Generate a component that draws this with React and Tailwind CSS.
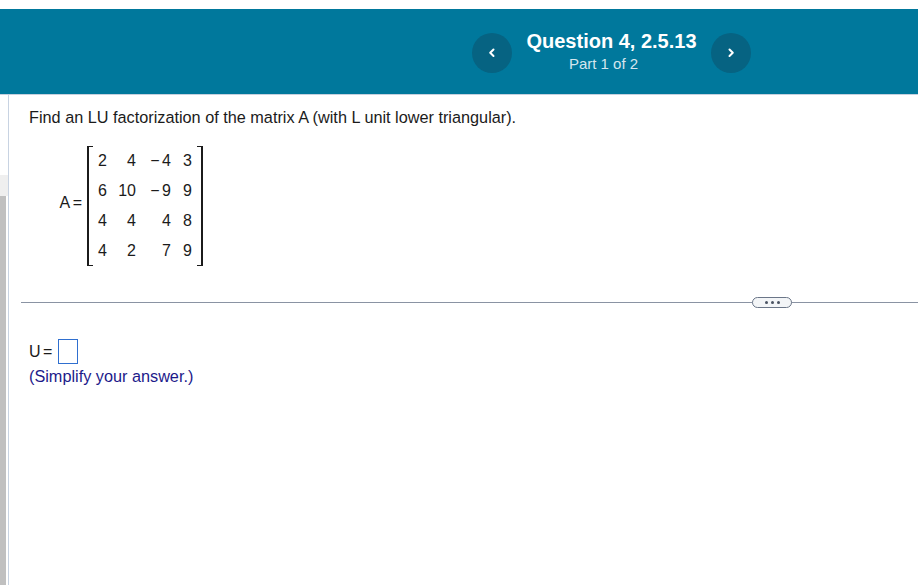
const font = { fontFamily: '"Liberation Sans", Arial, sans-serif' };

const rows = [
  ["2", "4", "\u2212 4", "3"],
  ["6", "10", "\u2212 9", "9"],
  ["4", "4", "4", "8"],
  ["4", "2", "7", "9"],
];

function Nav({ dir }) {
  return (
    <button className="mt-[2px] flex h-10 w-10 items-center justify-center rounded-full bg-[#066382]">
      <svg width="8" height="12" viewBox="0 0 8 12" fill="none" stroke="#ffffff" strokeWidth="2" strokeLinecap="round" strokeLinejoin="round">
        {dir === "left" ? <path d="M5.5 2.5 L2.2 5.8 L5.5 9" /> : <path d="M2.5 2.5 L5.8 5.8 L2.5 9" />}
      </svg>
    </button>
  );
}

export default function App() {
  return (
    <div className="flex h-[585px] w-[918px] flex-col overflow-hidden bg-white pt-[9px]" style={font}>
      <header className="flex h-[86px] shrink-0 items-center border-b border-[#c5d0de] bg-[#00789c] pl-[472px]">
        <Nav dir="left" />
        <div className="mb-[2px] ml-[14px] flex w-[171px] flex-col items-center">
          <div className="text-[20px] leading-[26px] font-bold text-white">Question 4, 2.5.13</div>
          <div className="mt-[1px] mr-[16px] text-[15px] leading-[18px] text-[#d5e6ee]">Part 1 of 2</div>
        </div>
        <div className="ml-[14px] flex"><Nav dir="right" /></div>
      </header>

      <div className="flex min-h-0 flex-1">
        <aside className="flex w-[9px] shrink-0 flex-col border-r border-[#c8d3e2]">
          <div className="h-[80px]" />
          <div className="h-[21px] w-[8px] bg-[#efefef]" />
          <div className="w-[6px] flex-1 bg-[#c0c0c0]" />
        </aside>

        <main className="min-w-0 flex-1">
          <div className="pl-[20px] pt-[13px] text-[16.25px] leading-[18px] text-[#1b1b1b]">
            Find an LU factorization of the matrix A (with L unit lower triangular).
          </div>

          <div className="mt-[20px] ml-[49px] flex items-center text-[16px] text-[#1b1b1b]">
            <span className="mb-[6px] mr-[5px] w-[24px] text-right text-[16px] whitespace-nowrap [word-spacing:-1px]">A =</span>
            <div className="relative h-[120px] w-[116px]">
              <div className="absolute inset-y-0 left-0 w-[6px] border-y border-l-2 border-[#1b1b1b]" />
              <div className="absolute inset-y-0 right-0 w-[6px] border-y border-r-2 border-[#1b1b1b]" />
              <div className="grid h-full grid-cols-[20px_29px_35px_21px] content-start">
                {rows.flat().map((c, i) => (
                  <div key={i} className="flex h-[30px] items-center justify-end whitespace-pre [word-spacing:-2px]">
                    {c}
                  </div>
                ))}
              </div>
            </div>
          </div>

          <div className="relative mt-[36px] ml-[12px] h-px bg-[#8a93a3]">
            <div className="absolute left-[731px] top-[-5px] flex h-[11px] w-[40px] items-center justify-center gap-[3px] rounded-[6px] border border-[#6b7688] bg-[#f3f5f7]">
              <span className="h-[3px] w-[3px] rounded-full bg-[#4a5362]" />
              <span className="h-[3px] w-[3px] rounded-full bg-[#4a5362]" />
              <span className="h-[3px] w-[3px] rounded-full bg-[#4a5362]" />
            </div>
          </div>

          <div className="mt-[36px] flex h-[25px] items-center pl-[20px] text-[16px] text-[#1b1b1b]">
            <span className="[word-spacing:-2px]">U =</span>
            <span className="ml-[6px] h-[25px] w-[20px] border border-[#2f6fcf] bg-white" />
          </div>
          <div className="mt-[2px] pl-[20px] text-[16.25px] leading-[20px] text-[#1c1a8a]">(Simplify your answer.)</div>
        </main>
      </div>
    </div>
  );
}
